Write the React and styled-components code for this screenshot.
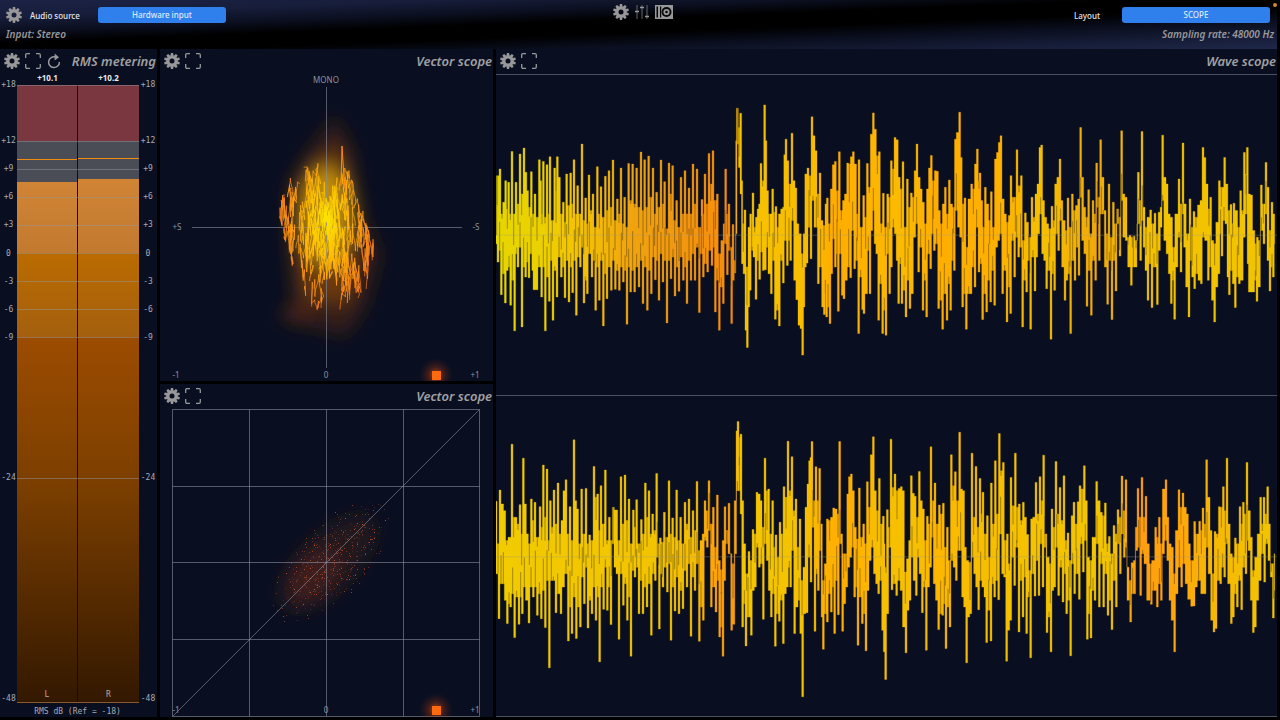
import React, { useId } from "react";
import styled, { createGlobalStyle } from "styled-components";

/* ---------- data ---------- */

const scale = [
  { db: "+18", span: 6 },
  { db: "+12", span: 3 },
  { db: "+9", span: 3 },
  { db: "+6", span: 3 },
  { db: "+3", span: 3 },
  { db: "0", span: 3 },
  { db: "-3", span: 3 },
  { db: "-6", span: 3 },
  { db: "-9", span: 15 },
  { db: "-24", span: 24 },
];

const meters = [
  { name: "L", peak: 10.1, level: 7.6 },
  { name: "R", peak: 10.2, level: 7.9 },
];

// envelope points "x,y", three units to a screen pixel, the two halves of the trace
const waveOne = {
  center: 464,
  top: -18,
  upper: [
    "18,285 20,375 24,285 30,265 36,400 40,365 47,300 52,385 56,305 61,400 66,212 71,400 78,305 84,370 90,220 95,340 102,202 108,275 113,330 118,380 124,273 129,400 135,340 141,410 148,237 153,300 156,400 160,242 165,410 171,252 175,400 180,228 187,420 194,262 198,330 202,228 208,290 214,400 220,365 225,425 230,280 236,375 242,277 247,370 252,237 257,400 263,315 269,400 276,190 281,420 287,352 292,430 297,283 303,390 309,340 315,440 322,258 328,400 333,318 340,410 346,287 351,390 357,270 363,380 369,238 375,420 382,355 387,400 393,262 398,430 404,350 410,440 416,248 422,360 428,250 434,370 440,262 446,380 453,214 459,390 464,237 470,380 476,226 482,350 489,262 494,400 500,335 506,380 513,238 518,370 524,303 530,445 537,247 543,340 548,255 554,420 560,360 567,440 573,290 579,400 585,270 591,400 597,322 603,400 609,250 615,370 621,265 627,440 636,357 640,400 645,280 651,370 657,218 662,310 669,210 676,360 682,340 688,520 697,480 702,430 707,265 712,400 717,370 722,500 729,432 735,540 739,180 742,82 747,140 752,97 756,300 760,430 765,388 771,560 777,440 782,400 785,430 789,337 794,440 799,410 804,385 808,370 813,248 818,300 824,72 828,180 833,330 838,400 848,325 853,395 858,378 863,440 868,400 876,385 880,380 883,222 888,175 894,240 899,310 906,157 912,300 918,322 923,430 930,460 937,520 942,460 947,280 954,262 960,285 966,108 972,165 978,210 984,340 990,277 996,420 1002,435 1008,370 1012,352 1018,430 1024,325 1030,252 1036,242 1042,330 1048,213 1054,390 1061,360 1066,340 1073,247 1078,250 1084,228 1090,213 1097,250 1102,400 1107,237 1114,440 1121,345 1127,410 1132,248 1138,320 1144,160 1150,96 1156,145 1162,225 1168,213 1174,430 1180,338 1186,440 1193,340 1199,350",
    "34,240 39,265 45,170 52,177 57,290 64,325 69,243 75,440 82,295 87,380 94,337 100,350 105,270 111,190 118,290 123,325 130,365 136,430 143,325 148,262 154,224 160,300 166,270 172,272 178,390 184,430 190,370 196,320 202,400 208,298 214,370 221,380 226,175 232,155 239,94 244,230 249,370 255,352 260,500 268,355 275,310 280,325 287,250 292,205 297,300 300,277 305,360 311,440 316,320 323,370 329,420 334,333 340,440 347,235 352,215 358,185 363,165 369,355 376,400 382,425 388,405 393,285 399,350 406,350 411,207 417,315 424,285 430,480 436,397 442,425 449,470 456,350 462,410 468,340 474,310 480,200 485,193 490,360 497,410 503,430 509,445 516,377 521,420 527,310 534,290 540,235 545,360 552,420 559,450 564,352 570,440 577,340 583,390 590,375 596,355 602,140 608,290 614,380 620,410 626,327 632,460 639,360 645,400 650,247 656,350 662,177 669,290 675,390 681,460 687,310 693,470 700,365 706,430 713,385 719,410 725,150 731,340 738,350 744,470 750,465 757,470 762,467 768,480 775,275 781,360 786,152 792,380 798,440 804,410 812,388 818,430 825,398 831,460 838,395 843,380 848,163 855,290 861,310 867,400 874,410 881,500 888,400 897,295 903,370 909,187 915,370 922,460 930,355 936,440 942,393 948,410 957,373 963,360 969,200 974,230 981,310 987,385 992,350 998,480 1004,490 1011,425 1018,300 1024,320 1034,230 1040,310 1047,390 1053,372 1058,430 1062,368 1070,390 1076,440 1082,330 1088,390 1093,215 1098,280 1102,200 1108,340 1114,343 1121,450 1128,490 1132,470 1138,480 1144,313 1150,370 1158,245 1164,320 1170,450 1176,365 1184,400",
  ],
  lower: [
    "18,490 24,545 29,510 34,643 39,580 46,668 52,570 57,560 62,675 67,600 74,752 80,520 84,560 90,500 96,740 101,560 107,590 112,545 117,592 123,520 128,570 132,628 141,628 147,560 155,650 160,560 166,752 171,590 178,663 183,540 189,720 194,570 201,650 207,530 214,590 219,560 225,652 230,540 237,665 242,560 248,637 253,540 259,705 265,530 271,560 276,500 282,668 286,600 292,640 298,520 306,590 311,540 317,690 322,560 328,660 334,540 340,737 345,580 351,655 357,560 364,630 370,540 376,627 382,570 388,630 394,560 400,605 405,570 411,732 416,560 422,635 428,570 434,635 440,560 447,620 452,540 459,670 465,560 472,690 478,570 484,640 490,530 496,598 502,540 507,660 513,520 519,605 525,540 531,728 537,540 543,595 549,530 555,647 560,560 567,633 573,530 580,600 585,560 591,670 597,540 603,600 609,520 615,600 621,500 628,697 634,520 640,590 647,550 653,575 659,510 666,555 671,500 676,695 681,600 688,750 694,620 700,670 705,490 712,583 718,510 725,730 730,600 736,578 739,460 743,190 748,260 752,340 757,550 762,580 768,750 772,802 777,680 781,630 786,510 792,530 798,657 804,540 809,597 814,515 820,570 826,568 832,500 836,580 844,640 849,540 856,717 862,690 868,737 873,540 880,608 886,480 892,555 897,480 902,540 908,420 914,600 921,658 927,735 933,745 938,825 942,680 947,560 951,548 957,440 963,535 969,360 975,440 979,440 985,610 992,560 998,680 1003,703 1006,640 1010,710 1014,680 1020,730 1026,580 1030,475 1036,560 1041,520 1045,693 1051,520 1057,645 1062,655 1068,600 1076,560 1082,592 1088,450 1094,565 1100,540 1106,760 1112,590 1118,688 1122,700 1130,640 1135,510 1140,640 1146,450 1150,390 1155,490 1160,520 1166,720 1172,610 1178,760 1183,690 1188,765 1194,520 1199,640",
    "34,560 40,440 46,460 51,540 56,670 61,550 66,670 72,630 78,710 84,600 90,685 96,640 104,470 110,430 116,575 122,500 129,690 134,600 140,710 146,520 152,565 158,460 163,510 170,490 176,685 181,660 188,747 193,640 201,720 206,610 212,690 218,540 223,570 229,390 236,440 242,470 248,680 253,640 259,747 266,640 273,640 280,560 285,620 290,440 297,575 302,550 308,718 313,640 320,695 326,600 332,665 338,570 344,675 350,500 356,480 362,460 368,640 374,570 381,725 386,620 392,700 398,480 404,590 410,470 416,530 422,500 428,740 434,600 440,635 446,540 452,747 459,530 465,632 470,530 476,460 482,400 488,520 494,540 500,625 506,570 513,777 519,580 524,630 530,460 536,510 542,420 548,560 555,660 560,600 567,580 572,760 578,540 585,600 590,500 597,585 602,350 608,480 615,520 621,678 627,570 634,705 640,540 647,600 652,380 658,540 664,400 670,400 676,560 683,672 688,540 696,718 702,540 708,632 714,430 720,527 725,360 732,470 740,480 746,560 754,615 760,560 768,560 776,430 782,540 787,420 792,500 798,570 804,660 810,550 816,682 822,560 832,673 838,510 844,440 848,360 855,480 862,520 868,580 874,670 879,600 884,717 890,560 897,470 903,575 908,400 914,500 920,620 927,710 932,540 938,590 944,625 950,580 958,600 964,610 970,470 978,480 985,600 991,560 998,660 1004,725 1010,620 1017,580 1022,460 1026,527 1032,420 1038,430 1044,590 1048,643 1054,570 1060,610 1066,682 1072,590 1078,610 1087,600 1092,470 1099,400 1104,550 1108,635 1121,635 1126,600 1131,663 1138,620 1144,450 1152,490 1158,400 1164,540 1170,632 1176,560 1180,590 1184,490",
  ],
  colors: [
    [0, "#e6d600"],
    [0.06, "#ecd000"],
    [0.1, "#f4c404"],
    [0.14, "#f2b60a"],
    [0.17, "#f0a40e"],
    [0.22, "#f09a10"],
    [0.28, "#f8900c"],
    [0.305, "#f08a10"],
    [0.31, "#f6c300"],
    [0.41, "#f8bc00"],
    [0.43, "#ffac00"],
    [0.52, "#fbbb00"],
    [0.56, "#ffae00"],
    [0.64, "#feb000"],
    [0.7, "#f5c000"],
    [0.77, "#f0a80a"],
    [0.82, "#f4c200"],
    [1, "#f2c400"],
  ],
};

const waveTwo = {
  center: 469,
  top: -15,
  upper: [
    "18,302 24,430 30,268 37,310 44,330 50,420 58,410 66,130 71,350 78,350 84,370 90,312 95,400 100,172 106,310 112,400 118,430 124,295 130,360 135,305 142,410 150,318 155,380 160,193 165,350 171,205 176,420 181,300 186,380 192,268 198,370 204,247 210,400 216,360 222,270 228,237 235,400 240,318 246,420 252,117 257,300 263,325 268,430 275,265 281,400 288,263 294,430 299,403 305,420 312,197 318,290 323,280 328,390 333,255 340,370 346,208 351,420 358,350 364,420 370,320 380,328 386,420 393,228 399,370 405,223 411,360 417,295 423,430 430,328 436,380 440,297 447,430 454,357 460,400 466,247 471,350 477,270 482,400 488,340 494,390 500,218 506,430 511,412 517,425 523,335 530,410 537,240 543,400 548,352 554,410 560,268 566,420 572,350 578,430 585,305 591,370 597,295 603,410 609,330 614,390 621,242 627,450 633,420 640,400 645,300 652,330 657,240 663,370 670,320 676,440 682,283 688,480 694,508 699,420 705,318 711,390 717,308 722,460 729,490 736,300 740,90 744,62 748,110 753,100 758,300 764,430 770,520 777,453 783,480 789,387 795,400 801,275 808,280 813,300 819,380 825,172 831,270 836,265 841,400 848,300 853,440 858,403 864,470 870,365 877,400 882,258 888,290 894,121 900,270 906,168 912,330 918,295 924,440 930,355 936,540 942,500 948,320 954,250 958,180 962,170 966,122 972,300 978,198 984,300 989,203 994,370 1000,540 1006,490 1012,355 1019,360 1024,350 1031,322 1038,325 1044,340 1049,122 1054,400 1061,460 1068,460 1073,280 1078,228 1084,220 1090,270 1096,380 1102,415 1108,262 1114,410 1121,370 1127,430 1132,243 1138,320 1144,162 1150,108 1156,270 1162,330 1168,233 1173,370 1180,347",
    "12,430 18,500 22,327 28,380 33,115 39,260 45,220 51,270 58,263 64,258 70,270 76,515 83,475 89,420 94,225 100,278 106,287 111,350 118,212 124,300 130,325 136,420 142,347 148,370 153,138 158,300 165,247 171,370 178,313 184,340 190,308 196,440 202,380 209,480 214,162 219,255 226,213 232,300 239,94 244,265 251,270 256,440 262,480 270,485 276,157 281,350 288,197 294,380 300,233 305,340 309,275 315,400 322,345 328,470 334,247 340,370 346,180 352,340 358,98 363,210 370,185 376,420 382,400 388,490 393,230 399,315 406,157 411,320 418,310 424,360 430,305 436,350 443,402 449,510 455,355 461,350 468,245 474,340 480,228 485,300 491,163 497,400 504,470 511,490 516,325 522,380 528,182 534,340 540,260 546,360 552,225 558,420 564,397 570,480 577,345 582,305 588,370 595,303 600,255 606,265 613,195 619,300 625,470 632,480 640,410 650,242 657,300 664,335 670,345 676,307 682,430 688,408 695,460 702,375 708,400 714,327 720,350 726,226 732,330 738,237 744,500 750,540 757,487 763,480 769,380 774,263 780,350 786,230 792,350 798,287 804,430 812,490 818,480 827,380 833,410 838,350 844,430 850,265 858,237 863,350 870,430 877,440 883,520 889,390 897,267 903,320 909,277 916,320 922,340 928,430 934,480 944,363 950,400 959,362 964,390 969,322 975,370 980,177 987,290 993,390 999,520 1005,393 1012,400 1018,318 1024,320 1030,258 1036,330 1041,172 1047,370 1054,460 1060,470 1066,412 1073,430 1080,318 1085,370 1090,305 1096,340 1101,185 1108,330 1114,410 1120,510 1128,470 1135,400 1142,290 1147,370 1152,290 1158,340 1163,258 1168,370 1174,490 1180,490 1184,460",
  ],
  lower: [
    "18,520 27,655 33,550 40,550 46,600 52,670 57,610 62,620 68,580 74,712 80,590 87,672 92,590 97,640 103,560 110,600 117,668 123,560 130,590 136,560 142,645 148,580 154,655 160,570 166,682 171,540 178,803 184,540 190,540 198,637 203,580 213,640 219,560 228,520 235,722 240,620 246,700 252,590 259,715 264,620 271,680 277,530 283,610 288,500 294,683 300,600 306,640 312,560 318,660 323,590 329,785 335,560 341,627 346,500 352,630 358,560 363,673 369,430 375,500 381,520 387,717 393,520 400,615 406,550 412,660 417,590 423,768 429,510 435,530 440,500 447,640 453,540 459,640 465,560 471,620 477,550 484,705 490,520 496,540 502,470 508,686 513,520 519,560 526,500 532,575 537,490 543,720 549,560 555,632 561,530 567,640 573,570 579,625 585,510 591,560 597,490 603,708 609,530 615,570 621,490 628,723 633,620 640,660 645,420 652,440 658,390 664,620 670,560 678,635 683,540 689,710 694,680 699,768 704,540 710,430 718,460 725,690 732,672 737,460 742,270 748,270 753,340 758,680 763,610 768,737 774,650 784,705 790,570 796,560 802,440 808,500 814,490 820,657 826,430 832,480 838,570 844,650 850,580 856,738 862,640 868,663 874,600 880,730 886,580 892,560 898,500 902,560 908,450 914,700 921,620 927,600 932,700 938,890 944,640 951,637 957,470 963,545 969,380 975,693 980,520 985,570 991,450 996,650 1000,747 1006,640 1012,665 1018,580 1024,635 1029,560 1034,700 1040,540 1045,643 1050,430 1058,693 1064,610 1070,560 1076,500 1082,470 1088,440 1094,590 1099,560 1104,735 1110,590 1117,670 1122,640 1128,752 1134,570 1140,480 1147,440 1154,520 1160,550 1166,580 1172,540 1178,690",
    "12,755 17,838 23,640 29,440 36,568 42,550 50,585 57,540 64,570 71,680 78,758 84,630 90,600 96,470 103,540 109,585 114,470 121,520 127,637 133,560 139,750 145,560 152,500 157,410 163,550 170,600 176,688 182,640 188,645 193,610 198,745 204,620 210,680 216,480 223,500 229,540 235,450 242,450 248,590 254,620 260,788 266,650 272,640 278,470 284,520 290,560 296,628 302,540 309,560 315,590 320,727 326,630 333,722 338,550 344,590 350,540 356,598 362,400 368,520 374,530 380,783 386,690 392,660 398,470 404,555 410,440 417,695 423,540 429,650 434,530 440,700 446,590 452,773 458,520 465,587 470,480 477,585 483,430 489,560 495,440 501,697 507,650 513,755 518,570 524,560 530,440 536,585 543,500 549,605 554,520 560,640 566,600 572,767 578,490 584,580 590,520 598,597 604,430 610,515 616,420 622,717 628,640 633,713 639,570 645,600 651,430 658,620 664,490 671,620 677,520 684,645 690,600 696,688 702,540 709,620 714,430 721,520 727,400 733,470 738,440 744,600 752,665 758,580 764,580 770,450 776,440 782,585 788,460 796,490 804,600 814,612 820,570 832,620 838,550 844,600 850,460 857,420 864,480 870,600 877,660 884,755 890,580 898,500 905,560 911,490 920,550 926,597 935,618 942,617 948,560 956,540 965,580 975,580 981,440 988,520 996,660 1002,695 1008,685 1014,540 1022,550 1028,500 1034,530 1040,430 1046,550 1054,670 1060,650 1066,580 1072,620 1078,540 1085,628 1092,500 1098,520 1101,420 1108,450 1114,600 1120,697 1126,680 1132,600 1140,540 1147,460 1154,545 1160,430 1168,480 1174,530 1180,653 1184,570",
  ],
  colors: [
    [0, "#f2cb00"],
    [0.2, "#f2c400"],
    [0.255, "#f4bc06"],
    [0.275, "#ffa608"],
    [0.305, "#f89a10"],
    [0.31, "#f4c600"],
    [0.39, "#f4c200"],
    [0.42, "#ffb200"],
    [0.45, "#ffae00"],
    [0.47, "#fdb400"],
    [0.49, "#f6c000"],
    [0.54, "#f6c000"],
    [0.56, "#feb600"],
    [0.6, "#f8bc00"],
    [0.68, "#f4c200"],
    [0.79, "#f2c400"],
    [0.82, "#ff9e10"],
    [0.88, "#ffa80a"],
    [0.92, "#f6b804"],
    [1, "#f2c600"],
  ],
};

const LEFT_OFFSET = -18;
const RIGHT_OFFSET = 1152;

const joinHalves = ([left, right]) => {
  const read = (text, dx) =>
    text.split(" ").map((pair) => {
      const [x, y] = pair.split(",").map(Number);
      return [x + dx, y];
    });
  return [...read(left, LEFT_OFFSET), ...read(right, RIGHT_OFFSET)];
};

const isExtreme = (points, i, sign) =>
  i > 0 &&
  i < points.length - 1 &&
  (points[i][1] - points[i - 1][1]) * sign >= 0 &&
  (points[i][1] - points[i + 1][1]) * sign >= 0;

// turns envelope points into upright columns, the outward spikes are kept thin
const toSteps = (points, sign) => {
  const steps = [];
  let x = points[0][0];
  points.forEach(([px, py], i) => {
    const next = points[i + 1];
    let end = px;
    if (next) {
      if (isExtreme(points, i, -sign)) end = px + 2.8;
      else if (isExtreme(points, i + 1, -sign)) end = next[0] - 2.8;
      else end = (px + next[0]) / 2;
    }
    steps.push([x, py], [end, py]);
    x = end;
  });
  return steps;
};

const pointsToPath = (points) => points.map((p) => p.join(" ")).join("L");

const makeRandom = (seed) => {
  let s = seed;
  return () => {
    s = (s + 0x6d2b79f5) | 0;
    let t = Math.imul(s ^ (s >>> 15), 1 | s);
    t = (t + Math.imul(t ^ (t >>> 7), 61 | t)) ^ t;
    return ((t ^ (t >>> 14)) >>> 0) / 4294967296;
  };
};

// dark slits that go from the notches into the body of the wave
const makeSlits = (points, sign, seed) => {
  const rnd = makeRandom(seed);
  return points
    .filter((p, i) => isExtreme(points, i, sign))
    .map(([x, y]) => `M${x} ${y}v${(sign * (10 + rnd() * 110)).toFixed(0)}`)
    .join("");
};

// x -> highest and lowest point of the trace
const outline = [
  [119, 134, 142],
  [126, 106, 176],
  [130, 104, 206],
  [138, 98, 230],
  [144, 88, 239],
  [158, 86, 239],
  [170, 94, 236],
  [177, 98, 242],
  [182, 88, 238],
  [190, 94, 232],
  [196, 120, 226],
  [204, 138, 230],
  [209, 158, 200],
  [213, 162, 186],
];

const rangeAt = (x) => {
  for (let i = 1; i < outline.length; i++) {
    const [x0, t0, b0] = outline[i - 1];
    const [x1, t1, b1] = outline[i];
    if (x <= x1) {
      const k = Math.max(0, (x - x0) / (x1 - x0));
      return [t0 + (t1 - t0) * k, b0 + (b1 - b0) * k];
    }
  }
  return outline[outline.length - 1].slice(1);
};

const makeStrands = (count, seed, minX, maxX, shrink) => {
  const rnd = makeRandom(seed);
  const strands = [];
  for (let n = 0; n < count; n++) {
    let x = minX + ((n + rnd()) / count) * (maxX - minX);
    const [t, b] = rangeAt(x);
    const pad = (b - t) * shrink;
    let y = t + pad + (b - t - pad * 2) * rnd();
    let d = `M${x.toFixed(1)} ${y.toFixed(1)}`;
    for (let i = 0; i < 8; i++) {
      const nx = Math.min(maxX, Math.max(minX, x + (rnd() - 0.45) * 7));
      const [top, bottom] = rangeAt(nx);
      const low = top + (bottom - top) * shrink;
      const high = bottom - (bottom - top) * shrink;
      let ny = y + (i % 2 ? 1 : -1) * (3 + rnd() * 27);
      if (ny < low) ny = low + rnd() * 14;
      if (ny > high) ny = high - rnd() * 14;
      const my = ((y + ny) / 2).toFixed(1);
      d += `C${x.toFixed(1)} ${my} ${nx.toFixed(1)} ${my} ${nx.toFixed(1)} ${ny.toFixed(1)}`;
      x = nx;
      y = ny;
    }
    strands.push(d);
  }
  return strands.join("");
};

const outerStrands = makeStrands(30, 17, 120, 213, 0);
const brightStrands = makeStrands(30, 29, 124, 208, 0.02);
const coreStrands = makeStrands(24, 53, 146, 188, 0.18);

const makeDots = (count, seed) => {
  const rnd = makeRandom(seed);
  const dots = [];
  while (dots.length < count) {
    const u = (rnd() + rnd()) * 1.1 - 1.1;
    const v = (rnd() + rnd()) * 1.1 - 1.1;
    if (u * u + v * v > 1) continue;
    dots.push({
      x: Math.round(170 + u * 54 + v * 22),
      y: Math.round(152 - u * 54 + v * 30),
      o: 0.25 + rnd() * 0.6,
      hot: rnd() > 0.65,
    });
  }
  return dots;
};

const dots = makeDots(520, 7);

/* ---------- icons ---------- */

const GearIcon = () => (
  <Icon viewBox="0 0 16 16" aria-hidden="true">
    <circle cx="8" cy="8" r="4.1" fill="none" stroke="currentColor" strokeWidth="3.2" />
    {[0, 36, 72, 108, 144, 180, 216, 252, 288, 324].map((a) => (
      <path
        key={a}
        d="M6.4 3 6.9 0h2.2L9.6 3z"
        fill="currentColor"
        transform={`rotate(${a} 8 8)`}
      />
    ))}
  </Icon>
);

const FullscreenIcon = () => (
  <Icon viewBox="0 0 16 16" aria-hidden="true">
    <path
      d="M.7 5V2Q.7.7 2 .7h3M11 .7h3q1.300 0 1.300 1.300v3M15.300 11v3q0 1.300-1.300 1.300h-3M5 15.300H2Q.7 15.300.7 14v-3"
      fill="none"
      stroke="currentColor"
      strokeWidth="1.300"
    />
  </Icon>
);

const RefreshIcon = () => (
  <Icon viewBox="0 0 16 16" aria-hidden="true">
    <path
      d="M9.500 4A5.400 5.400 0 1 0 13.400 9"
      fill="none"
      stroke="currentColor"
      strokeWidth="1.500"
    />
    <path d="M8.600.6 13 4.300 8.600 7.400z" fill="currentColor" />
  </Icon>
);

const SlidersIcon = () => (
  <Icon viewBox="0 0 16 16" aria-hidden="true">
    <path
      d="M3 1v14M8 1v14M13 1v14"
      stroke="currentColor"
      strokeWidth="1"
      opacity=".65"
    />
    <path d="M1 7.500h4M6 3.500h4M11 12.500h4" stroke="currentColor" strokeWidth="1.600" />
  </Icon>
);

const PlayerIcon = () => (
  <Icon $wide viewBox="0 0 18 14" aria-hidden="true">
    <path d="M0 0h18v14H0z" fill="currentColor" />
    <path d="M1.500 1.500h1.500v11H1.500z" fill="#08080c" />
    <circle cx="11.500" cy="7" r="5" fill="#08080c" />
    <circle cx="11.500" cy="7" r="2.200" fill="none" stroke="currentColor" strokeWidth="1.800" />
    <path d="M5 1.500h1.200v11H5z" fill="#08080c" />
  </Icon>
);

/* ---------- scopes ---------- */

const Marker = ({ y }) => (
  <>
    <circle cx="276" cy={y} r="17" fill="url(#markerGlow)" />
    <rect x="272" y={y - 4} width="9" height="9" fill="#ff6a10" />
  </>
);

const MarkerGlow = () => (
  <radialGradient id="markerGlow">
    <stop offset="0" stopColor="#ff5a10" stopOpacity=".75" />
    <stop offset=".45" stopColor="#c04010" stopOpacity=".3" />
    <stop offset="1" stopColor="#802010" stopOpacity="0" />
  </radialGradient>
);

const Goniometer = () => (
  <Scope viewBox="0 0 333 307" role="img" aria-label="Vector scope, mono and side">
    <defs>
      <MarkerGlow />
      <filter id="soft" x="-50%" y="-50%" width="200%" height="200%">
        <feGaussianBlur stdDeviation="9" />
      </filter>
      <radialGradient
        id="heat"
        gradientUnits="userSpaceOnUse"
        cx="0"
        cy="0"
        r="1"
        gradientTransform="translate(166 146) scale(50 94)"
      >
        <stop offset="0" stopColor="#ffe800" />
        <stop offset=".35" stopColor="#ffc400" />
        <stop offset=".7" stopColor="#ff9a10" />
        <stop offset="1" stopColor="#fa7c1a" />
      </radialGradient>
    </defs>
    <g filter="url(#soft)">
      <path
        d="M128 110 150 74 176 42 194 80 202 136 220 180 206 232 186 262 134 248 130 190z"
        fill="#4c2614"
        opacity=".65"
      />
      <path
        d="M136 120 150 90 180 70 194 130 198 190 188 230 144 226 134 170z"
        fill="#7c4412"
        opacity=".75"
      />
      <ellipse cx="166" cy="142" rx="24" ry="50" fill="#c8960a" opacity=".9" />
      <ellipse cx="136" cy="240" rx="14" ry="9" fill="#6a2c12" opacity=".6" />
    </g>
    <Axis d="M166.500 13V294M32 153.500H302" />
    <g fill="none" stroke="url(#heat)">
      <path d={outerStrands} strokeWidth="1" opacity=".7" />
      <path d={brightStrands} strokeWidth="1" opacity=".75" />
      <path d={coreStrands} strokeWidth="1" opacity=".85" />
    </g>
    <path d="M181 112 182 72 184 104 186 124" fill="none" stroke="#ff8a18" />
    <ScopeText x="166" y="9">MONO</ScopeText>
    <ScopeText x="17" y="156">+S</ScopeText>
    <ScopeText x="316" y="156">-S</ScopeText>
    <ScopeText x="16" y="304">-1</ScopeText>
    <ScopeText x="166" y="304">0</ScopeText>
    <ScopeText x="315" y="304">+1</ScopeText>
    <Marker y={301} />
  </Scope>
);

const Lissajous = () => (
  <Scope viewBox="0 0 333 308" role="img" aria-label="Vector scope, left and right">
    <ScopeText x="16" y="304">-1</ScopeText>
    <ScopeText x="166" y="304">0</ScopeText>
    <ScopeText x="315" y="304">+1</ScopeText>
    <g filter="url(#soft)">
      <ellipse
        cx="168"
        cy="154"
        rx="62"
        ry="28"
        transform="rotate(-45 168 154)"
        fill="#40201c"
        opacity=".45"
      />
      <ellipse
        cx="154"
        cy="166"
        rx="32"
        ry="20"
        transform="rotate(-45 154 166)"
        fill="#5c281a"
        opacity=".5"
      />
    </g>
    {dots.map((dot, i) => (
      <rect
        key={i}
        x={dot.x}
        y={dot.y}
        width="1"
        height="1"
        fill={dot.hot ? "#e05a26" : "#8c3a2c"}
        opacity={dot.o}
      />
    ))}
    <Axis d="M12.500.500H319.500V307.500H12.500zM89.500.500v307M166.500.500v307M243.500.500v307M12.500 77.500h307M12.500 153.500h307M12.500 230.500h307" />
    <Axis d="M12.500 307.500 319.500.500" />
    <Marker y={301} />
  </Scope>
);

const Wave = ({ wave, label }) => {
  const id = useId();
  const upper = joinHalves(wave.upper);
  const lower = joinHalves(wave.lower);
  const outlinePoints = [...toSteps(upper, 1), ...toSteps(lower, -1).reverse()];
  return (
    <WaveBox>
      <WaveSvg
        viewBox={`0 ${wave.top} 2343 963`}
        preserveAspectRatio="none"
        role="img"
        aria-label={label}
      >
        <linearGradient id={id} gradientUnits="userSpaceOnUse" x1="0" y1="0" x2="2343" y2="0">
          {wave.colors.map(([offset, color]) => (
            <stop key={offset} offset={offset} stopColor={color} />
          ))}
        </linearGradient>
        <path
          d={`M${pointsToPath(outlinePoints)}Z`}
          fill={`url(#${id})`}
          stroke={`url(#${id})`}
          strokeWidth="1"
        />
        <path
          d={makeSlits(upper, 1, 3) + makeSlits(lower, -1, 5)}
          stroke="#2a200a"
          strokeWidth="2"
          opacity=".6"
        />
        <path d={`M0 ${wave.center}H2343`} stroke="#a09a80" strokeWidth="3" opacity=".35" />
      </WaveSvg>
    </WaveBox>
  );
};

/* ---------- meter ---------- */

const ScaleColumn = () => (
  <ScaleList>
    {scale.map((step) => (
      <ScaleStep key={step.db} $span={step.span}>
        <span>{step.db}</span>
      </ScaleStep>
    ))}
    <ScaleEnd>-48</ScaleEnd>
  </ScaleList>
);

const MeterBar = ({ meter }) => (
  <Bar>
    <Band $span={6} $fill="#7a373f" />
    <Band $span={12 - meter.peak} $fill="#4a4c56" />
    <PeakBand $span={meter.peak - meter.level} $fill="#4a4c56" />
    <Band $span={meter.level} $fill="linear-gradient(#d08434, #c27a30)" />
    <Band $span={9} $fill="linear-gradient(#bb6b00, #a4600f)" />
    <Band $span={39} $fill="linear-gradient(#9c4c00, #7c3f00 40%, #331800)">
      <ChannelName>{meter.name}</ChannelName>
    </Band>
  </Bar>
);

const PanelHeader = ({ title, refresh }) => (
  <PanelBar>
    <IconButton aria-label={`${title} settings`}>
      <GearIcon />
    </IconButton>
    <IconButton aria-label={`${title} full screen`}>
      <FullscreenIcon />
    </IconButton>
    {refresh && (
      <IconButton aria-label="Reset">
        <RefreshIcon />
      </IconButton>
    )}
    <PanelTitle>{title}</PanelTitle>
  </PanelBar>
);

const App = () => {
  return (
    <Page>
      <GlobalStyle />
      <TopBar>
        <TopRow>
          <TopGroup>
            <IconButton aria-label="Audio settings">
              <GearIcon />
            </IconButton>
            <FieldLabel htmlFor="source">Audio source</FieldLabel>
            <BlueButton id="source" $width={128}>
              Hardware input
            </BlueButton>
          </TopGroup>
          <CenterGroup>
            <IconButton aria-label="Settings">
              <GearIcon />
            </IconButton>
            <IconButton aria-label="Mixer">
              <SlidersIcon />
            </IconButton>
            <IconButton aria-label="Player">
              <PlayerIcon />
            </IconButton>
          </CenterGroup>
          <TopGroup $end>
            <FieldLabel htmlFor="layout">Layout</FieldLabel>
            <BlueButton id="layout" $width={148}>
              SCOPE
            </BlueButton>
          </TopGroup>
        </TopRow>
        <InfoRow>
          <span>Input: Stereo</span>
          <span>Sampling rate: 48000 Hz</span>
        </InfoRow>
        <StatusDot />
      </TopBar>
      <Main>
        <Panel>
          <PanelHeader title="RMS metering" refresh />
          <PeakRow>
            {meters.map((meter) => (
              <span key={meter.name}>+{meter.peak}</span>
            ))}
          </PeakRow>
          <MeterBody>
            <ScaleColumn />
            <Bars>
              {meters.map((meter) => (
                <MeterBar key={meter.name} meter={meter} />
              ))}
              <Lines>
                {scale.map((step) => (
                  <Line key={step.db} $span={step.span} />
                ))}
              </Lines>
            </Bars>
            <ScaleColumn />
          </MeterBody>
          <MeterFooter>RMS dB (Ref = -18)</MeterFooter>
        </Panel>
        <PanelStack>
          <Panel>
            <PanelHeader title="Vector scope" />
            <Goniometer />
          </Panel>
          <Panel>
            <PanelHeader title="Vector scope" />
            <Lissajous />
          </Panel>
        </PanelStack>
        <Panel>
          <PanelHeader title="Wave scope" />
          <Wave wave={waveOne} label="Left channel wave" />
          <Wave wave={waveTwo} label="Right channel wave" />
        </Panel>
      </Main>
    </Page>
  );
};

const GlobalStyle = createGlobalStyle`
  * {
    box-sizing: border-box;
  }

  body {
    margin: 0;
    background: #000;
    font-family: "Noto Sans", "Open Sans", sans-serif;
  }
`;

const Page = styled.div`
  display: flex;
  flex-direction: column;
  height: 100vh;
  min-height: 480px;
  padding: 0 3px 3px 0;
  color: #a4a4a6;
  overflow: hidden;
`;

const TopBar = styled.header`
  position: relative;
  display: flex;
  flex-direction: column;
  height: 49px;
  background: linear-gradient(
    to bottom right,
    #1b2346 0%,
    #171d3a 18%,
    #0b0f20 32%,
    #000 44%,
    #000 58%,
    #090d1c 70%,
    #171e3a 88%,
    #1f284a 100%
  );
`;

const TopRow = styled.div`
  display: grid;
  grid-template-columns: 1fr auto 1fr;
  height: 27px;
`;

const TopGroup = styled.div`
  display: flex;
  align-items: center;
  justify-content: ${(props) => (props.$end ? "flex-end" : "flex-start")};
  gap: ${(props) => (props.$end ? "22px" : "8px")};
  padding: 3px 7px 0 6px;

  label + button {
    margin-left: ${(props) => (props.$end ? "0" : "10px")};
  }
`;

const CenterGroup = styled.div`
  display: flex;
  align-items: center;
  gap: 5px;
  padding: 0 0 3px 8px;
`;

const FieldLabel = styled.label`
  font-size: 8px;
  font-weight: 500;
  color: #e4e4e8;
`;

const BlueButton = styled.button`
  width: ${(props) => props.$width}px;
  height: 16px;
  padding: 0;
  border: 0;
  border-radius: 3px;
  background: #2f80ed;
  color: #dfeafc;
  font: inherit;
  font-size: 8px;
  font-weight: 500;
  line-height: 16px;
`;

const IconButton = styled.button`
  display: flex;
  padding: 0;
  border: 0;
  background: none;
  color: #98989a;
`;

const Icon = styled.svg`
  width: ${(props) => (props.$wide ? 18 : 16)}px;
  height: ${(props) => (props.$wide ? 14 : 16)}px;
`;

const InfoRow = styled.div`
  display: flex;
  justify-content: space-between;
  padding: 0 3px 0 6px;
  font-size: 10px;
  font-style: italic;
  font-weight: 600;
  line-height: 14px;
  color: #98989c;
`;

const StatusDot = styled.i`
  position: absolute;
  top: 3px;
  right: 0;
  width: 4px;
  height: 4px;
  border-radius: 50%;
  background: #d08a30;
`;

const Main = styled.main`
  flex: 1;
  min-height: 0;
  display: grid;
  grid-template-columns: 157fr 333fr 781fr;
  gap: 3px;
`;

const Panel = styled.section`
  display: flex;
  flex-direction: column;
  min-width: 0;
  min-height: 0;
  background: #090f21;
  overflow: hidden;
`;

const PanelStack = styled.div`
  display: grid;
  grid-template-rows: 332fr 333fr;
  gap: 3px;
  min-width: 0;
  min-height: 0;
`;

const PanelBar = styled.div`
  flex: none;
  display: flex;
  align-items: center;
  gap: 5px;
  height: 25px;
  padding: 0 1px 1px 4px;
`;

const PanelTitle = styled.h2`
  flex: 1;
  margin: 0;
  font-size: 13px;
  font-style: italic;
  font-weight: 600;
  line-height: 16px;
  text-align: right;
  white-space: nowrap;
  color: #a0a0a2;
`;

const Scope = styled.svg`
  flex: 1;
  min-height: 0;
  width: 100%;
`;

const Axis = styled.path`
  fill: none;
  stroke: #8a8e9c;
  stroke-width: 1;
  opacity: 0.6;
`;

const ScopeText = styled.text`
  font-size: 8px;
  fill: #8e929e;
  text-anchor: middle;
`;

const WaveBox = styled.div`
  flex: 1;
  min-height: 0;
  display: flex;
  border-top: 1px solid #4c5160;

  &:last-child {
    border-bottom: 1px solid #4c5160;
  }
`;

const WaveSvg = styled.svg`
  width: 100%;
  height: 100%;
`;

const PeakRow = styled.div`
  flex: none;
  display: grid;
  grid-template-columns: 1fr 1fr;
  height: 11px;
  padding: 0 18px 0 17px;
  font-size: 8px;
  font-weight: 700;
  line-height: 8px;
  text-align: center;
  color: #e8e8ea;
`;

const MeterBody = styled.div`
  flex: 1;
  min-height: 0;
  display: grid;
  grid-template-columns: 17px 1fr 18px;
`;

const ScaleList = styled.div`
  display: flex;
  flex-direction: column;
  font-family: "DejaVu Sans Mono", "Liberation Mono", monospace;
  font-size: 8px;
  line-height: 12px;
  text-align: center;
  color: #a8aab2;
`;

const ScaleStep = styled.div`
  flex: ${(props) => props.$span} 0 0;
  min-height: 0;

  span {
    display: block;
    margin-top: -6px;
  }
`;

const ScaleEnd = styled.span`
  height: 10px;
  margin-top: -10px;
`;

const Bars = styled.div`
  position: relative;
  display: grid;
  grid-template-columns: 60fr 61fr;
  gap: 1px;
  border-bottom: 1px solid #8a5a2c;
`;

const Bar = styled.div`
  display: flex;
  flex-direction: column;
`;

const Band = styled.div`
  flex: ${(props) => props.$span} 0 0;
  display: flex;
  align-items: flex-end;
  justify-content: center;
  min-height: 0;
  background: ${(props) => props.$fill};
`;

const PeakBand = styled(Band)`
  box-shadow: inset 0 1px #f08c10;
`;

const ChannelName = styled.span`
  padding-bottom: 2px;
  font-family: "DejaVu Sans Mono", "Liberation Mono", monospace;
  font-size: 8px;
  line-height: 10px;
  color: #b8aa98;
`;

const Lines = styled.div`
  position: absolute;
  inset: 0;
  display: flex;
  flex-direction: column;
`;

const Line = styled.div`
  flex: ${(props) => props.$span} 0 0;
  box-shadow: inset 0 1px rgba(150, 150, 150, 0.5);
`;

const MeterFooter = styled.div`
  flex: none;
  height: 14px;
  padding-right: 2px;
  font-family: "DejaVu Sans Mono", "Liberation Mono", monospace;
  font-size: 8px;
  line-height: 18px;
  text-align: center;
  color: #a8aab2;
`;

export default App;
